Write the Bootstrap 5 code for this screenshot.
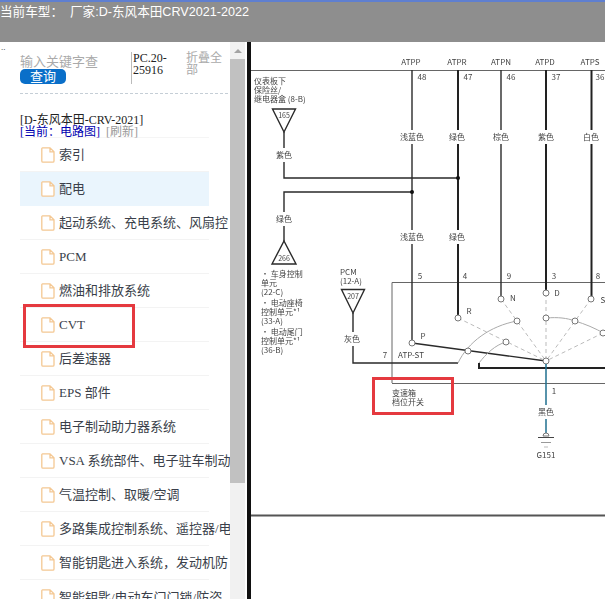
<!DOCTYPE html>
<html lang="zh-CN">
<head>
  <meta charset="UTF-8" />
  <meta name="viewport" content="width=device-width, initial-scale=1.0"/>
  <title>电路图</title>
  <link href="https://cdn.jsdelivr.net/npm/bootstrap@5.3.0/dist/css/bootstrap.min.css" rel="stylesheet"/>
  <style>
    html, body { height: 599px; overflow: hidden; }
    body {
      background: #fff;
      font-family: "Liberation Serif", "Noto Sans CJK SC", serif;
      font-size: 13px;
      color: #333;
    }
    .top-bar {
      height: 42px;
      background: #8e8e8e;
      border-top: 2px solid #5f7fd0;
      color: #fff;
      font-family: "Liberation Sans", "Noto Sans CJK SC", sans-serif;
      font-size: 12.6px;
      line-height: 16px;
      padding-top: 2px;
      white-space: nowrap;
      overflow: hidden;
    }
    .main-area { height: 557px; }
    .side-panel { width: 230px; overflow: hidden; flex: none; position: relative; }
    .dots { height: 10px; font-size: 9px; line-height: 9px; padding: 1px 0 0 1px; color: #333; }
    .search-row { margin-left: 20px; width: 208px; height: 42px; padding-bottom: 9px; border-bottom: 1px dashed #c5ced6; }
    .search-box { width: 111px; padding-top: 3px; }
    .search-hint { color: #aaa; font-size: 13px; line-height: 14px; white-space: nowrap; width: 80px; overflow: hidden; }
    .search-go {
      display: block;
      width: 46px; height: 15px; padding: 0;
      background: #0a6fc9; border: 0; border-radius: 5px;
      color: #fff; font-size: 13px; line-height: 15px;
    }
    .code-box { width: 55px; border-left: 1px solid #bbb; padding-left: 1px; font-size: 12px; line-height: 12px; color: #222; }
    .fold-box { width: 40px; color: #aaa; font-size: 12px; line-height: 12px; }
    .model-info { margin: 20px 0 0 20px; font-size: 12px; line-height: 12px; color: #222; white-space: nowrap; }
    .model-now { color: #0000b0; }
    .model-fresh { color: #999; margin-left: 6px; }
    .tree-list { margin: -1px 0 0 20px; width: 189px; border-top: 1px solid #f5f5f5; }
    .tree-item {
      height: 34px;
      padding: 0 0 0 21px;
      border: 0;
      border-bottom: 1px solid #f3f3f3;
      background: transparent;
      white-space: nowrap;
      color: #3a3f4a;
      font-size: 13px;
      line-height: 33px;
      display: flex;
      align-items: center;
      gap: 4px;
      overflow: visible;
    }
    .tree-item.picked { background: #eaf5fd; border-bottom-color: #eaf5fd; }
    .red-mark { position: absolute; left: 23px; top: 262px; width: 112px; height: 44px; border: 3px solid #e5393f; }
    .scroll-rail { width: 15px; flex: none; background: #f1f1f1; }
    .scroll-up { height: 17px; display: flex; align-items: center; justify-content: center; }
    .scroll-up i { width: 0; height: 0; border: 4px solid transparent; border-bottom: 4px solid #a3a3a3; border-top: 0; }
    .scroll-thumb { height: 424px; background: #c1c1c1; }
    .draw-panel { flex: 1; border-left: 4px solid #111; margin-left: 2px; min-width: 0; background: #fff; }
    .draw-panel svg { display: block; filter: blur(.35px); }
    .wire { fill: none; stroke: #2a2a2a; stroke-width: 1.4; }
    .wire-thick { fill: none; stroke: #222; stroke-width: 2; }
    .wire-thin { fill: none; stroke: #666; stroke-width: 1; }
    .dash { fill: none; stroke: #bbb; stroke-width: 1; stroke-dasharray: 4 3; }
    .arc { fill: none; stroke: #aaa; stroke-width: 1; }
    .pin { fill: #fff; stroke: #777; stroke-width: 1; }
    .lbl { font-family: "Noto Sans CJK SC", "Liberation Sans", sans-serif; font-size: 8px; fill: #444; }
    .lbl-m { text-anchor: middle; }
    .lbl-bg { fill: #fff; }
  </style>
</head>
<body>

  <div class="top-bar">当前车型：&nbsp; 厂家:D-东风本田CRV2021-2022</div>

  <div class="main-area d-flex">
    <div class="side-panel">
      <div class="dots">..</div>
      <div class="search-row d-flex">
        <div class="search-box">
          <div class="search-hint">输入关键字查</div>
          <button type="button" class="btn search-go">查询</button>
        </div>
        <div class="code-box">PC.20-25916</div>
        <div class="fold-box">折叠全部</div>
      </div>
      <div class="model-info">
        [D-东风本田-CRV-2021]<br>
        <span class="model-now">[当前：电路图]</span><span class="model-fresh">[刷新]</span>
      </div>
      <div class="list-group list-group-flush tree-list" id="tree"></div>
      <div class="red-mark"></div>
    </div>

    <div class="scroll-rail">
      <div class="scroll-up"><i></i></div>
      <div class="scroll-thumb"></div>
    </div>

    <div class="draw-panel">
      <svg width="354" height="557" viewBox="251 42 354 557">
        <!-- top rule and connector columns -->
        <path class="wire-thin" d="M250 70.5H605"/>
        <path class="wire-thin" d="M392 383V282.5H605M392 383.5H605"/>
        <path class="wire" d="M412 70V343"/>
        <path class="wire-thick" d="M458 70V318"/>
        <path class="wire" d="M501 70V299"/>
        <path class="wire-thick" d="M546 70V293"/>
        <path class="wire-thick" d="M591.5 70V299"/>

        <!-- left feeds -->
        <path class="wire" d="M284 132V178H458M284 241V192H412"/>
        <circle cx="458" cy="178" r="2" fill="#111"/>
        <circle cx="412" cy="192" r="2" fill="#111"/>
        <path class="wire" d="M272.5 109H295.5L284 132Z" fill="#fff"/>
        <path class="wire" d="M284 241L296 264H272Z" fill="#fff"/>
        <path class="wire" d="M341.500 289.500H364.500L353 313Z"/>
        <path class="wire" d="M353 313V363H458"/>

        <!-- switch -->
        <path class="wire" d="M412 343L546 361"/>
        <path class="dash" d="M458 318L546 361M501 299L517 321L546 361M546 293V361M591 299L546 361M603 333L546 361"/>
        <path class="arc" d="M458 363C468 342 490 326 517 321M479 363C486 354 495 345 506 342M546 318C558 317 567 318 575 321C585 324 595 328 605 334"/>
        <path class="wire-thick" d="M479 363V368H605"/>
        <circle class="pin" cx="412" cy="343" r="3"/>
        <circle class="pin" cx="458" cy="318" r="3"/>
        <circle class="pin" cx="501" cy="299" r="3"/>
        <circle class="pin" cx="546" cy="293" r="3"/>
        <circle class="pin" cx="591" cy="299" r="3"/>
        <circle class="pin" cx="468" cy="351" r="3"/>
        <circle class="pin" cx="506" cy="342" r="3"/>
        <circle class="pin" cx="517" cy="321" r="3"/>
        <circle class="pin" cx="546" cy="318" r="3"/>
        <circle class="pin" cx="575" cy="321" r="3"/>
        <circle class="pin" cx="603" cy="333" r="3"/>
        <circle class="pin" cx="546" cy="361" r="3"/>

        <!-- ground -->
        <path d="M546 364V433" fill="none" stroke="#1f6f8f" stroke-width="1.5"/>
        <path d="M546 433a3 3 0 0 1 3 3h-6a3 3 0 0 1 3-3Z" class="pin"/>
        <path d="M538 437.500H554" stroke="#444" stroke-width="1"/>
        <path d="M541 442.500H551" stroke="#999" stroke-width="1"/>
        <path d="M544 447H548" stroke="#bbb" stroke-width="1"/>

        <!-- bottom rule -->
        <path d="M250 515.500H605" stroke="#555" stroke-width="2"/>

        <!-- labels sitting on wires -->
        <g class="lbl-bg">
          <rect x="398" y="130" width="28" height="14"/><rect x="447" y="130" width="22" height="14"/>
          <rect x="490" y="130" width="22" height="14"/><rect x="535" y="130" width="22" height="14"/>
          <rect x="580" y="130" width="22" height="14"/>
          <rect x="398" y="230" width="28" height="14"/><rect x="447" y="230" width="22" height="14"/>
          <rect x="273" y="148" width="22" height="14"/><rect x="273" y="212" width="22" height="14"/>
          <rect x="342" y="332" width="22" height="14"/><rect x="535" y="405" width="22" height="14"/>
        </g>
        <g class="lbl lbl-m">
          <text x="411" y="65">ATPP</text><text x="457" y="65">ATPR</text><text x="501" y="65">ATPN</text>
          <text x="545" y="65">ATPD</text><text x="590" y="65">ATPS</text>
          <text x="422" y="80">48</text><text x="468" y="80">47</text><text x="511" y="80">46</text>
          <text x="556" y="80">37</text><text x="600" y="80">36</text>
          <text x="412" y="140">浅蓝色</text><text x="457" y="140">绿色</text><text x="501" y="140">棕色</text>
          <text x="546" y="140">紫色</text><text x="591" y="140">白色</text>
          <text x="412" y="240">浅蓝色</text><text x="457" y="240">绿色</text>
          <text x="420" y="279">5</text><text x="465" y="279">4</text><text x="509" y="279">9</text>
          <text x="554" y="279">3</text><text x="598" y="279">8</text>
          <text x="284" y="158">紫色</text><text x="284" y="222">绿色</text><text x="352" y="342">灰色</text>
          <text x="284" y="118" font-size="7">165</text><text x="284" y="261" font-size="7">266</text>
          <text x="353" y="299" font-size="7">207</text>
          <text x="423" y="339">P</text><text x="469" y="314">R</text><text x="513" y="301">N</text>
          <text x="557" y="296">D</text><text x="603" y="303">S</text>
          <text x="385" y="358">7</text><text x="554" y="394">1</text><text x="546" y="415">黑色</text>
          <text x="546" y="458">G151</text>
        </g>
        <g class="lbl">
          <text x="254" y="84">仪表板下</text><text x="254" y="93">保险丝/</text><text x="254" y="102">继电器盒 (8-B)</text>
          <text x="261" y="277">· 车身控制</text><text x="261" y="286">单元</text><text x="261" y="295">(22-C)</text>
          <text x="261" y="306">· 电动座椅</text><text x="261" y="315">控制单元*¹</text><text x="261" y="324">(33-A)</text>
          <text x="261" y="335">· 电动尾门</text><text x="261" y="344">控制单元*¹</text><text x="261" y="353">(36-B)</text>
          <text x="340" y="275">PCM</text><text x="340" y="284">(12-A)</text>
          <text x="398" y="358">ATP-ST</text>
          <text x="392" y="396">变速箱</text><text x="392" y="405">档位开关</text>
        </g>
        <rect x="373.500" y="378.500" width="79" height="35" fill="none" stroke="#e5393f" stroke-width="3"/>
      </svg>
    </div>
  </div>

  <script>
    var rows = ["索引", "配电", "起动系统、充电系统、风扇控", "PCM", "燃油和排放系统", "CVT", "后差速器", "EPS 部件",
      "电子制动助力器系统", "VSA 系统部件、电子驻车制动", "气温控制、取暖/空调", "多路集成控制系统、遥控器/电",
      "智能钥匙进入系统，发动机防", "智能钥匙/电动车门门锁/防盗"];
    var icon = '<svg width="14" height="16" viewBox="0 0 14 16" class="flex-shrink-0"><path d="M1.500.8H9L13 4.800V14a1.200 1.200 0 0 1-1.200 1.200H2A1.200 1.200 0 0 1 .8 14V1.500A.8.8 0 0 1 1.500.8ZM9 .8V4.800H13" fill="#fff" stroke="#f4c893" stroke-width="1.300"/></svg>';
    document.getElementById("tree").innerHTML = rows.map(function (r, i) {
      return '<div class="list-group-item tree-item' + (i === 1 ? ' picked' : '') + '">' + icon + '<span>' + r + '</span></div>';
    }).join("");
  </script>
  <script src="https://cdn.jsdelivr.net/npm/bootstrap@5.3.0/dist/js/bootstrap.bundle.min.js"></script>
</body>
</html>
